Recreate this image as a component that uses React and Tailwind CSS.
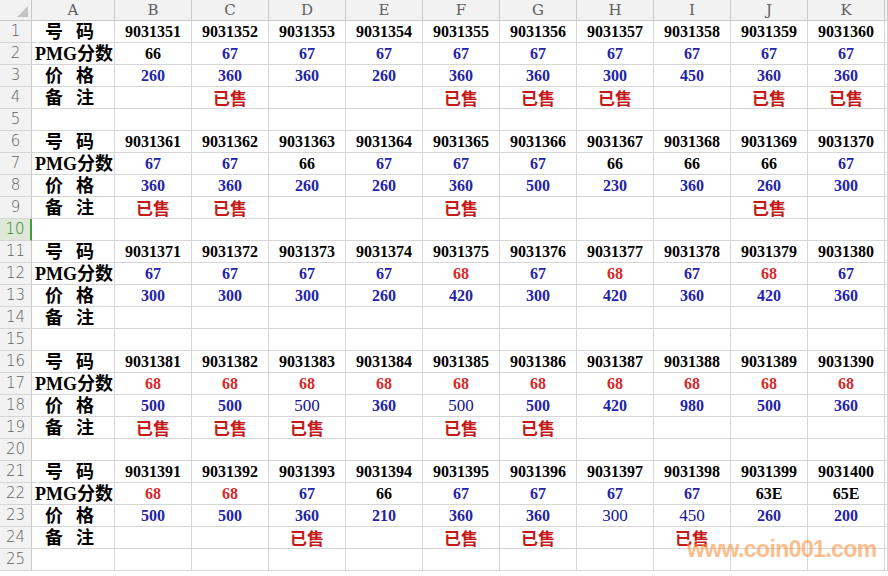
// 工作表：PMG 钞号价格表
const COLS = ['B', 'C', 'D', 'E', 'F', 'G', 'H', 'I', 'J', 'K'];

const blocks = [
  {
    start: 9031351,
    pmg: ['66', '67', '67', '67', '67', '67', '67', '67', '67', '67'],
    price: ['260', '360', '360', '260', '360', '360', '300', '450', '360', '360'],
    note: ['', 1, '', '', 1, 1, 1, '', 1, 1],
  },
  {
    start: 9031361,
    pmg: ['67', '67', '66', '67', '67', '67', '66', '66', '66', '67'],
    price: ['360', '360', '260', '260', '360', '500', '230', '360', '260', '300'],
    note: [1, 1, '', '', 1, '', '', '', 1, ''],
  },
  {
    start: 9031371,
    pmg: ['67', '67', '67', '67', '68', '67', '68', '67', '68', '67'],
    price: ['300', '300', '300', '260', '420', '300', '420', '360', '420', '360'],
    note: ['', '', '', '', '', '', '', '', '', ''],
  },
  {
    start: 9031381,
    pmg: ['68', '68', '68', '68', '68', '68', '68', '68', '68', '68'],
    price: ['500', '500', '500', '360', '500', '500', '420', '980', '500', '360'],
    note: [1, 1, 1, '', 1, 1, '', '', '', ''],
  },
  {
    start: 9031391,
    pmg: ['68', '68', '67', '66', '67', '67', '67', '67', '63E', '65E'],
    price: ['500', '500', '360', '210', '360', '360', '300', '450', '260', '200'],
    note: ['', '', 1, '', 1, 1, '', 1, '', ''],
  },
];

// 这几个格子的字体不是粗体
const plain = new Set(['18-2', '18-4', '23-6', '23-7']);

const pmgColor = (v) =>
  v === '67' ? 'text-[#2323a8]' : v === '68' ? 'text-[#d42a2a]' : 'text-black';

function RowHead({ n, active }) {
  return (
    <div
      className={`h-[22px] flex items-center justify-center border-b border-[#d6d6d6] text-[15px] font-['DejaVu_Sans','Noto_Sans',sans-serif] font-extralight ${
        active
          ? 'bg-[#dde9d6] text-[#3c7a34] border-r-2 border-r-[#4c9a3f]'
          : 'bg-[#f2f2f2] text-[#606060] border-r border-r-[#c9c9c9]'
      }`}
    >
      {n}
    </div>
  );
}

function Cell({ children, className = '' }) {
  return (
    <div
      className={`h-[22px] flex items-center justify-center border-r border-b border-[#d6d6d6] whitespace-nowrap overflow-visible ${className}`}
    >
      {children}
    </div>
  );
}

function LabelCell({ parts, pad }) {
  return (
    <div
      className={`h-[22px] flex items-center gap-[13px] pt-[2px] border-r border-b border-[#d6d6d6] whitespace-nowrap font-bold text-[18px] text-black font-['Liberation_Serif','Noto_Sans_CJK_SC',serif] ${pad}`}
    >
      {parts.map((p) => (
        <span key={p}>{p}</span>
      ))}
    </div>
  );
}

const num = "font-['Liberation_Serif','Noto_Sans_CJK_SC',serif] text-[16px]";
const cjk = "font-['Noto_Sans_CJK_SC',sans-serif] font-bold text-[17px] text-[#c41a1a] pt-[1px]";

export default function App() {
  const rows = [];
  let r = 1;
  blocks.forEach((b, bi) => {
    const ids = COLS.map((_, i) => String(b.start + i));
    rows.push({ n: r++, parts: ['号', '码'], pad: 'pl-[13px]', cells: ids.map((t) => ({ t, c: 'text-black' })) });
    rows.push({
      n: r++,
      parts: ['PMG分数'],
      pad: 'pl-[3px]',
      cells: b.pmg.map((t) => ({ t, c: pmgColor(t) })),
    });
    const pr = r++;
    rows.push({
      n: pr,
      parts: ['价', '格'],
      pad: 'pl-[13px]',
      cells: b.price.map((t, i) => ({ t, c: 'text-[#2323a8]', plain: plain.has(`${pr}-${i}`) })),
    });
    rows.push({
      n: r++,
      parts: ['备', '注'],
      pad: 'pl-[13px]',
      cells: b.note.map((t) => ({ t: t ? '已售' : '', note: true })),
    });
    if (bi < blocks.length - 1) rows.push({ n: r++, empty: true });
  });
  rows.push({ n: r++, empty: true });

  return (
    <div className="relative w-[888px] h-[576px] overflow-hidden bg-white">
      <div className="grid grid-cols-[32px_83px_repeat(10,77px)_1fr]">
        {/* 表头 */}
        <div className="h-[21px] bg-[#f2f2f2] border-r border-b border-[#c9c9c9] relative">
          <svg className="absolute right-[3px] bottom-[3px]" width="11" height="11" viewBox="0 0 11 11">
            <polygon points="11,0 11,11 0,11" fill="#c4c4c4" />
          </svg>
        </div>
        {['A', ...COLS, ''].map((c, i) => (
          <div
            key={i}
            className="h-[21px] bg-[#f2f2f2] border-r border-b border-[#c9c9c9] flex items-center justify-center text-[15px] text-[#606060] font-['DejaVu_Serif','Liberation_Serif',serif] font-extralight"
          >
            {c}
          </div>
        ))}

        {rows.map((row) => (
          <div key={row.n} className="contents">
            <RowHead n={row.n} active={row.n === 10} />
            {row.empty ? (
              <>
                <Cell />
                {COLS.map((c) => (
                  <Cell key={c} />
                ))}
                <Cell />
              </>
            ) : (
              <>
                <LabelCell parts={row.parts} pad={row.pad} />
                {row.cells.map((cell, i) => (
                  <Cell
                    key={i}
                    className={
                      cell.note
                        ? cjk
                        : `${num} ${cell.c} ${cell.plain ? 'font-normal text-[17px] text-[#14148f]' : 'font-bold'}`
                    }
                  >
                    {cell.t}
                  </Cell>
                ))}
                <Cell />
              </>
            )}
          </div>
        ))}
      </div>

      {/* 水印 */}
      <div className="absolute left-[687px] top-[532px] text-[23px] font-bold tracking-[-0.6px] text-[#fa9440] opacity-60 font-['Liberation_Sans',Arial,sans-serif] pointer-events-none">
        www.coin001.com
      </div>
    </div>
  );
}
